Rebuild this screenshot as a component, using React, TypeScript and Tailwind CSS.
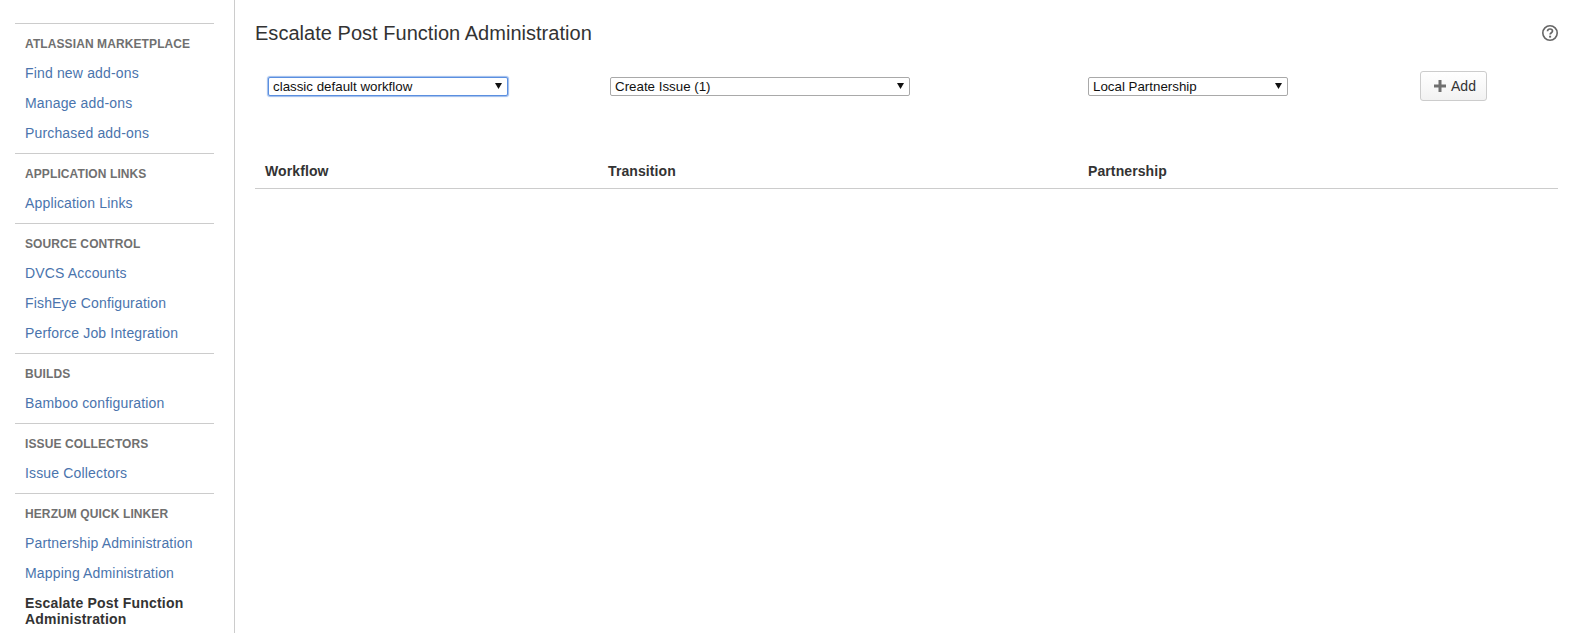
const font = "[font-family:'Liberation_Sans',Arial,sans-serif]";

interface NavSection {
  title: string;
  links: string[];
  active?: string;
}

const sections: NavSection[] = [
  {
    title: "Atlassian Marketplace",
    links: ["Find new add-ons", "Manage add-ons", "Purchased add-ons"],
  },
  { title: "Application Links", links: ["Application Links"] },
  {
    title: "Source Control",
    links: ["DVCS Accounts", "FishEye Configuration", "Perforce Job Integration"],
  },
  { title: "Builds", links: ["Bamboo configuration"] },
  { title: "Issue Collectors", links: ["Issue Collectors"] },
  {
    title: "Herzum Quick Linker",
    links: ["Partnership Administration", "Mapping Administration"],
    active: "Escalate Post Function Administration",
  },
];

function Sidebar() {
  return (
    <aside className="w-[235px] shrink-0 border-r border-[#cccccc] pl-[15px] pr-[20px] pt-[23px]">
      {sections.map((section) => (
        <div key={section.title} className="border-t border-[#cccccc] pb-[5px]">
          <h2 className="flex h-[34px] items-center pl-[10px] pt-[6px] text-[12px] font-bold uppercase leading-[16px] tracking-[0.1px] text-[#707070]">
            {section.title}
          </h2>
          {section.links.map((link) => (
            <a
              key={link}
              href="#"
              className="flex h-[30px] items-center pl-[10px] text-[14px] leading-[16px] tracking-[0.16px] text-[#4a74ad]"
            >
              {link}
            </a>
          ))}
          {section.active && (
            <div className="pl-[10px] pt-[7px] text-[14px] font-bold leading-[16px] tracking-[0.2px] text-[#333333]">
              {section.active}
            </div>
          )}
        </div>
      ))}
    </aside>
  );
}

function SelectBox({
  value,
  width,
  focused,
}: {
  value: string;
  width: string;
  focused?: boolean;
}) {
  return (
    <div className={`relative ${width}`}>
      <select
        defaultValue={value}
        className={`block h-[19px] w-full appearance-none rounded-[2px] border bg-white pl-[4px] text-[13.33px] leading-[15px] text-[#111111] ${
          focused
            ? "border-[#5b8fe0] shadow-[0_0_1px_1px_rgba(91,143,224,0.6)]"
            : "border-[#a9a9a9]"
        }`}
      >
        <option>{value}</option>
      </select>
      <svg
        viewBox="0 0 7 6"
        className="pointer-events-none absolute right-[6px] top-[6px] h-[6px] w-[7px]"
      >
        <path d="M0 0H7L3.5 6Z" fill="#111111" />
      </svg>
    </div>
  );
}

function HelpIcon() {
  return (
    <svg viewBox="0 0 16 16" className="h-4 w-4" fill="none">
      <circle cx="8" cy="8" r="7.2" stroke="#666666" strokeWidth="1.6" />
      <path
        d="M5.5 6.2C5.6 4.8 6.7 4 8 4C9.4 4 10.5 4.9 10.5 6.1C10.5 7.7 8.1 7.8 8.1 9.6"
        stroke="#666666"
        strokeWidth="1.7"
      />
      <rect x="7.1" y="10.7" width="2" height="1.9" fill="#666666" />
    </svg>
  );
}

export default function App() {
  return (
    <div className={`flex h-[633px] overflow-hidden bg-white ${font}`}>
      <Sidebar />
      <main className="min-w-0 flex-1 pl-[20px] pr-[13px]">
        <div className="flex h-[65px] items-center justify-between">
          <h1 className="text-[20px] font-normal leading-[24px] tracking-[0.03px] text-[#333333]">
            Escalate Post Function Administration
          </h1>
          <HelpIcon />
        </div>

        <div className="mt-[3px] flex h-[36px] items-center">
          <div className="w-[343px] shrink-0 pl-[13px]">
            <SelectBox value="classic default workflow" width="w-[240px]" focused />
          </div>
          <div className="w-[478px] shrink-0 pl-[12px]">
            <SelectBox value="Create Issue (1)" width="w-[300px]" />
          </div>
          <div className="w-[344px] shrink-0 pl-[12px]">
            <SelectBox value="Local Partnership" width="w-[200px]" />
          </div>
          <button className="flex h-[30px] w-[67px] items-center justify-center gap-[5px] rounded-[3px] border border-[#cccccc] bg-gradient-to-b from-white to-[#f2f2f2] pl-[3px] text-[14px] text-[#333333]">
            <svg viewBox="0 0 12 12" className="h-[12px] w-[12px]">
              <path d="M4.5 0H7.5V4.5H12V7.5H7.5V12H4.5V7.5H0V4.5H4.5Z" fill="#707070" />
            </svg>
            Add
          </button>
        </div>

        <div className="mt-[48px] flex h-[37px] items-center border-b border-[#cccccc] pt-[2px] text-[14px] font-bold tracking-[0.1px] text-[#333333]">
          <div className="w-[343px] shrink-0 pl-[10px]">Workflow</div>
          <div className="w-[480px] shrink-0 pl-[10px]">Transition</div>
          <div className="pl-[10px]">Partnership</div>
        </div>
      </main>
    </div>
  );
}
